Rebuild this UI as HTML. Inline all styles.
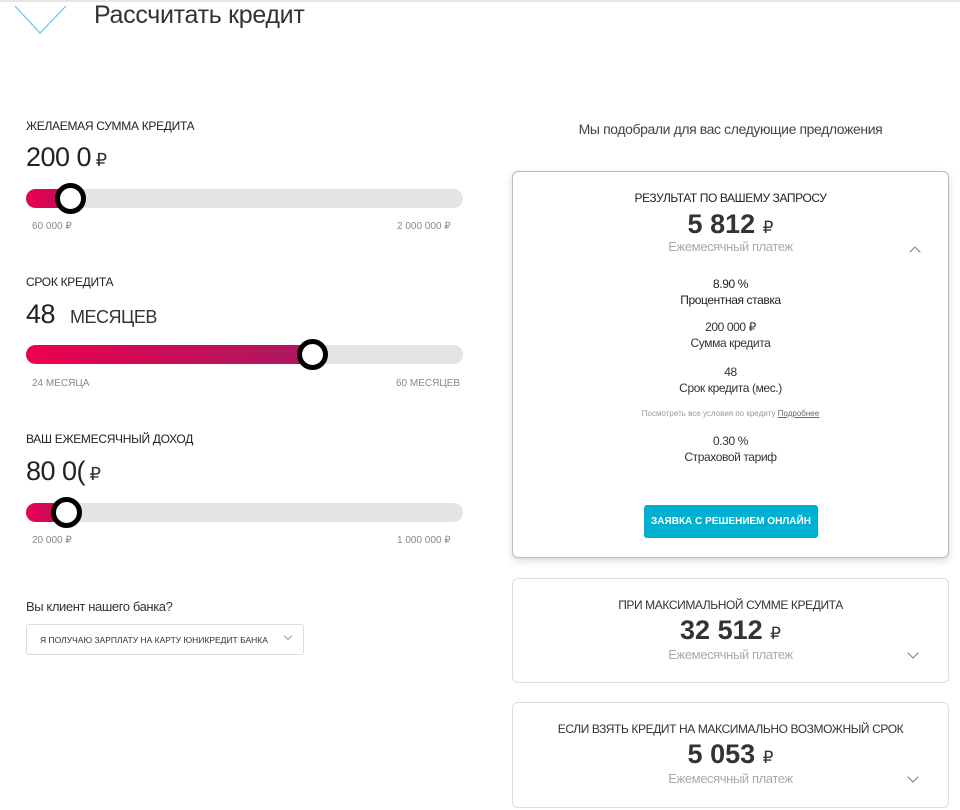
<!DOCTYPE html>
<html><head><meta charset="utf-8"><style>
*{margin:0;padding:0;box-sizing:border-box}
body{width:960px;height:810px;overflow:hidden;background:#fff;font-family:"Liberation Sans Narrow","Liberation Sans",sans-serif;color:#222;position:relative}
.a{position:absolute;white-space:nowrap}
.c{text-align:center}
.lab{font-size:12px;color:#222;letter-spacing:-0.3px}
.val{font-size:27px;color:#222;letter-spacing:-0.5px}
.rub{font-size:18px;color:#333}
.small{font-size:10px;color:#888}
.track{position:absolute;left:26px;width:437px;height:19px;border-radius:10px;background:#e4e4e4;overflow:hidden}
.fill{position:absolute;left:0;top:0;height:19px;background:linear-gradient(90deg,#ec0050,#b8105e)}
.knob{position:absolute;width:31px;height:31px;border-radius:50%;border:5px solid #000;background:#fff}
.card{position:absolute;left:512px;width:437px;border:1px solid #ddd;border-radius:6px;background:#fff}
.chev{position:absolute;width:8px;height:8px;border-right:1px solid #777;border-bottom:1px solid #777}
.t{letter-spacing:-0.4px}
</style></head><body>
<div class="a" style="left:0;top:0;width:960px;height:2px;background:#e6e6e6"></div>
<svg class="a" style="left:14px;top:5px" width="54" height="30"><path d="M1 1 L26 28 L52 1" fill="none" stroke="#5cc8ef" stroke-width="1.2"/></svg>
<div class="a" style="left:94px;top:1px;font-size:25px;color:#333;letter-spacing:-0.3px">Рассчитать кредит</div>

<div class="a lab" style="left:26px;top:119px">ЖЕЛАЕМАЯ СУММА КРЕДИТА</div>
<div class="a val" style="left:26px;top:142px">200 0<span class="rub"> ₽</span></div>
<div class="track" style="top:189px"><div class="fill" style="width:44px"></div></div>
<div class="knob" style="left:55px;top:183px"></div>
<div class="a small" style="left:32px;top:221px">60 000 ₽</div>
<div class="a small" style="left:397px;top:221px">2 000 000 ₽</div>

<div class="a lab" style="left:26px;top:275px">СРОК КРЕДИТА</div>
<div class="a val" style="left:26px;top:299px">48 <span style="font-size:18px;color:#333;margin-left:8px">МЕСЯЦЕВ</span></div>
<div class="track" style="top:345px"><div class="fill" style="width:287px;background:linear-gradient(90deg,#ec0050,#a81a60)"></div></div>
<div class="knob" style="left:297px;top:339px"></div>
<div class="a small" style="left:32px;top:378px">24 МЕСЯЦА</div>
<div class="a small" style="left:396px;top:378px">60 МЕСЯЦЕВ</div>

<div class="a lab" style="left:26px;top:432px">ВАШ ЕЖЕМЕСЯЧНЫЙ ДОХОД</div>
<div class="a val" style="left:26px;top:456px">80 0(<span class="rub"> ₽</span></div>
<div class="track" style="top:503px"><div class="fill" style="width:40px"></div></div>
<div class="knob" style="left:51px;top:497px"></div>
<div class="a small" style="left:32px;top:535px">20 000 ₽</div>
<div class="a small" style="left:397px;top:535px">1 000 000 ₽</div>

<div class="a t" style="left:26px;top:599px;font-size:13px;color:#333">Вы клиент нашего банка?</div>
<div class="a" style="left:26px;top:624px;width:278px;height:31px;border:1px solid #ddd;border-radius:3px;font-size:8.5px;color:#333;padding:10px 0 0 13px">Я ПОЛУЧАЮ ЗАРПЛАТУ НА КАРТУ ЮНИКРЕДИТ БАНКА</div>
<div class="chev" style="left:285px;top:633px;width:6px;height:6px;transform:rotate(45deg);border-color:#999"></div>

<div class="a c t" style="left:512px;width:437px;top:121px;font-size:14px;color:#444">Мы подобрали для вас следующие предложения</div>

<div class="card" style="top:171px;height:387px;border-color:#bbb;box-shadow:0 3px 8px rgba(0,0,0,.15)">
<div class="a c t" style="left:0;width:435px;top:19px;font-size:12px;color:#222">РЕЗУЛЬТАТ ПО ВАШЕМУ ЗАПРОСУ</div>
<div class="a c" style="left:0;width:435px;top:37px;font-size:27px;font-weight:bold;color:#333">5 812 <span style="font-size:17px;font-weight:normal">₽</span></div>
<div class="a c t" style="left:0;width:435px;top:67px;font-size:13px;color:#aaa">Ежемесячный платеж</div>
<div class="chev" style="left:398px;top:76px;transform:rotate(-135deg)"></div>
<div class="a c t" style="left:0;width:435px;top:104px;font-size:12px;line-height:16px">8.90 %<br>Процентная ставка</div>
<div class="a c t" style="left:0;width:435px;top:147px;font-size:12px;line-height:16px;color:#333">200 000 ₽<br>Сумма кредита</div>
<div class="a c t" style="left:0;width:435px;top:192px;font-size:12px;line-height:16px;color:#333">48<br>Срок кредита (мес.)</div>
<div class="a c" style="left:0;width:435px;top:237px;font-size:8px;color:#999">Посмотреть все условия по кредиту <u style="color:#666">Подробнее</u></div>
<div class="a c t" style="left:0;width:435px;top:261px;font-size:12px;line-height:16px;color:#333">0.30 %<br>Страховой тариф</div>
<div class="a c" style="left:131px;width:174px;top:333px;height:33px;background:#00b0d0;border-radius:3px;color:#fff;font-size:10px;font-weight:bold;line-height:33px">ЗАЯВКА С РЕШЕНИЕМ ОНЛАЙН</div>
</div>

<div class="card" style="top:578px;height:105px">
<div class="a c t" style="left:0;width:435px;top:19px;font-size:12px;color:#333">ПРИ МАКСИМАЛЬНОЙ СУММЕ КРЕДИТА</div>
<div class="a c" style="left:0;width:435px;top:36px;font-size:27px;font-weight:bold;color:#333">32 512 <span style="font-size:17px;font-weight:normal">₽</span></div>
<div class="a c t" style="left:0;width:435px;top:68px;font-size:13px;color:#aaa">Ежемесячный платеж</div>
<div class="chev" style="left:396px;top:70px;transform:rotate(45deg)"></div>
</div>

<div class="card" style="top:702px;height:106px">
<div class="a c t" style="left:0;width:435px;top:19px;font-size:12px;color:#333">ЕСЛИ ВЗЯТЬ КРЕДИТ НА МАКСИМАЛЬНО ВОЗМОЖНЫЙ СРОК</div>
<div class="a c" style="left:0;width:435px;top:36px;font-size:27px;font-weight:bold;color:#333">5 053 <span style="font-size:17px;font-weight:normal">₽</span></div>
<div class="a c t" style="left:0;width:435px;top:68px;font-size:13px;color:#aaa">Ежемесячный платеж</div>
<div class="chev" style="left:396px;top:70px;transform:rotate(45deg)"></div>
</div>
</body></html>
